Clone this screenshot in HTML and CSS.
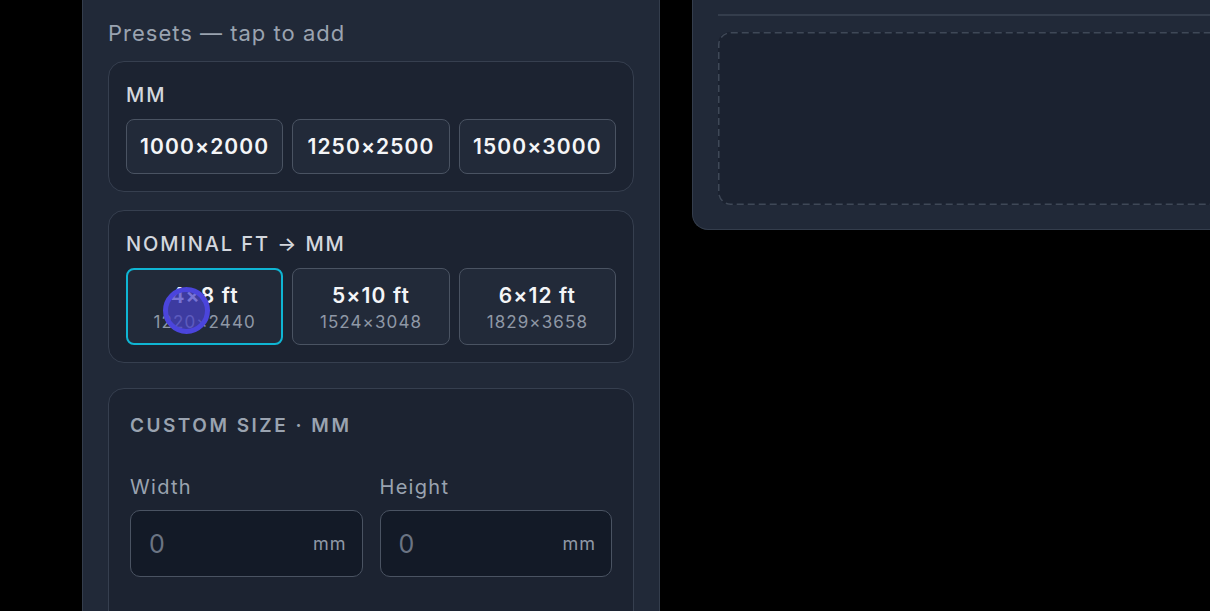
FILE: index.html
```html
<!DOCTYPE html>
<html lang="en">
<head>
<meta charset="utf-8">
<title>Sheet sizes</title>
<link rel="stylesheet" href="styles.css">
</head>
<body>
<div class="app">
  <aside class="panel side">
    <p class="hint">Presets — tap to add</p>

    <section class="group">
      <h3 class="group-title">MM</h3>
      <div class="chips">
        <button class="chip">1000×2000</button>
        <button class="chip">1250×2500</button>
        <button class="chip">1500×3000</button>
      </div>
    </section>

    <section class="group">
      <h3 class="group-title">NOMINAL FT → MM</h3>
      <div class="chips">
        <button class="chip tall selected"><span class="chip-main">4×8 ft</span><span class="chip-sub">1220×2440</span></button>
        <button class="chip tall"><span class="chip-main">5×10 ft</span><span class="chip-sub">1524×3048</span></button>
        <button class="chip tall"><span class="chip-main">6×12 ft</span><span class="chip-sub">1829×3658</span></button>
      </div>
    </section>

    <section class="group custom">
      <h3 class="custom-title">CUSTOM SIZE · MM</h3>
      <div class="fields">
        <label class="field">
          <span class="field-label">Width</span>
          <span class="input"><span class="input-value">0</span><span class="unit">mm</span></span>
        </label>
        <label class="field">
          <span class="field-label">Height</span>
          <span class="input"><span class="input-value">0</span><span class="unit">mm</span></span>
        </label>
      </div>
    </section>

    <span class="touch" aria-hidden="true"></span>
  </aside>

  <main class="panel board">
    <div class="divider"></div>
    <div class="dropzone">
      <svg class="dropzone-outline" aria-hidden="true"><rect x="0.75" y="0.75" rx="12" ry="12"></rect></svg>
    </div>
  </main>
</div>
</body>
</html>
```

FILE: styles.css
```css
* {
  box-sizing: border-box;
}

html, body {
  margin: 0;
  height: 611px;
  overflow: hidden;
  background: #000;
  font-family: Inter, "Noto Sans", "Liberation Sans", sans-serif;
}

.app {
  display: flex;
  align-items: flex-start;
  gap: 32px;
  padding-left: 82px;
}

.panel {
  background: #212938;
  border: 1px solid #343d4c;
}

/* left column: presets and custom size */
.side {
  position: relative;
  flex: 0 0 578px;
  height: 660px;
  border-top: none;
  border-bottom: none;
  padding: 19px 25px 0;
}

.hint {
  margin: 0 0 14px;
  font-size: 22px;
  line-height: 28px;
  letter-spacing: 1px;
  color: #9aa3b0;
}

.group {
  background: #1c2331;
  border: 1px solid #363f4f;
  border-radius: 16px;
  padding: 20px 17px 17px;
  margin-bottom: 18px;
}

.group-title {
  margin: 0 0 11px;
  font-size: 20px;
  line-height: 26px;
  font-weight: 500;
  letter-spacing: 1.9px;
  color: #d3d7de;
}

.chips {
  display: grid;
  grid-template-columns: repeat(3, 1fr);
  gap: 9px;
}

.chip {
  height: 55px;
  padding: 0;
  background: #222a39;
  border: 1.5px solid #4a5362;
  border-radius: 8px;
  font-family: inherit;
  font-size: 21px;
  font-weight: 600;
  letter-spacing: 1.1px;
  color: #f4f5f7;
}

.chip.tall {
  height: 77px;
  display: flex;
  flex-direction: column;
  align-items: center;
  justify-content: center;
  gap: 2px;
  padding-top: 2px;
}

.chip.selected {
  border: 2px solid #0fb5d3;
}

.chip-main {
  line-height: 26px;
}

.chip-sub {
  font-size: 17px;
  font-weight: 400;
  line-height: 22px;
  letter-spacing: 1.1px;
  color: #8f98a6;
}

.group.custom {
  margin-top: 25px;
  padding: 24px 21px 60px;
}

.custom-title {
  margin: 0 0 35px;
  font-size: 19px;
  line-height: 26px;
  font-weight: 600;
  letter-spacing: 2.5px;
  color: #9aa3b0;
}

.fields {
  display: grid;
  grid-template-columns: 1fr 1fr;
  gap: 17px;
}

.field {
  display: flex;
  flex-direction: column;
  gap: 10px;
}

.field-label {
  font-size: 20px;
  line-height: 26px;
  letter-spacing: 1.3px;
  color: #9aa3b0;
}

.input {
  height: 67px;
  display: flex;
  align-items: center;
  justify-content: space-between;
  padding: 0 15px 0 18px;
  background: #131a27;
  border: 1.5px solid #4a5362;
  border-radius: 10px;
}

.input-value {
  font-size: 25px;
  color: #6b7483;
}

.unit {
  font-size: 18px;
  letter-spacing: 1px;
  color: #8f98a6;
}

/* touch indicator over the active chip */
.touch {
  position: absolute;
  left: 80px;
  top: 287px;
  width: 47px;
  height: 47px;
  border-radius: 50%;
  border: 5px solid #4b45dc;
  background: rgba(72, 66, 200, 0.72);
}

/* right column: sheet list area */
.board {
  flex: 0 0 620px;
  border-top: none;
  border-right: none;
  border-radius: 0 0 0 16px;
  padding: 14px 0 24px 25px;
}

.divider {
  height: 2px;
  background: #343d4c;
  margin-bottom: 16px;
}

.dropzone {
  position: relative;
  height: 173px;
  background: #1b2230;
  border-radius: 12px;
}

.dropzone-outline {
  position: absolute;
  inset: 0;
  width: 100%;
  height: 100%;
  overflow: visible;
}

.dropzone-outline rect {
  width: calc(100% - 1.5px);
  height: calc(100% - 1.5px);
  fill: none;
  stroke: #3f4857;
  stroke-width: 1.5;
  stroke-dasharray: 7 4;
}
```
